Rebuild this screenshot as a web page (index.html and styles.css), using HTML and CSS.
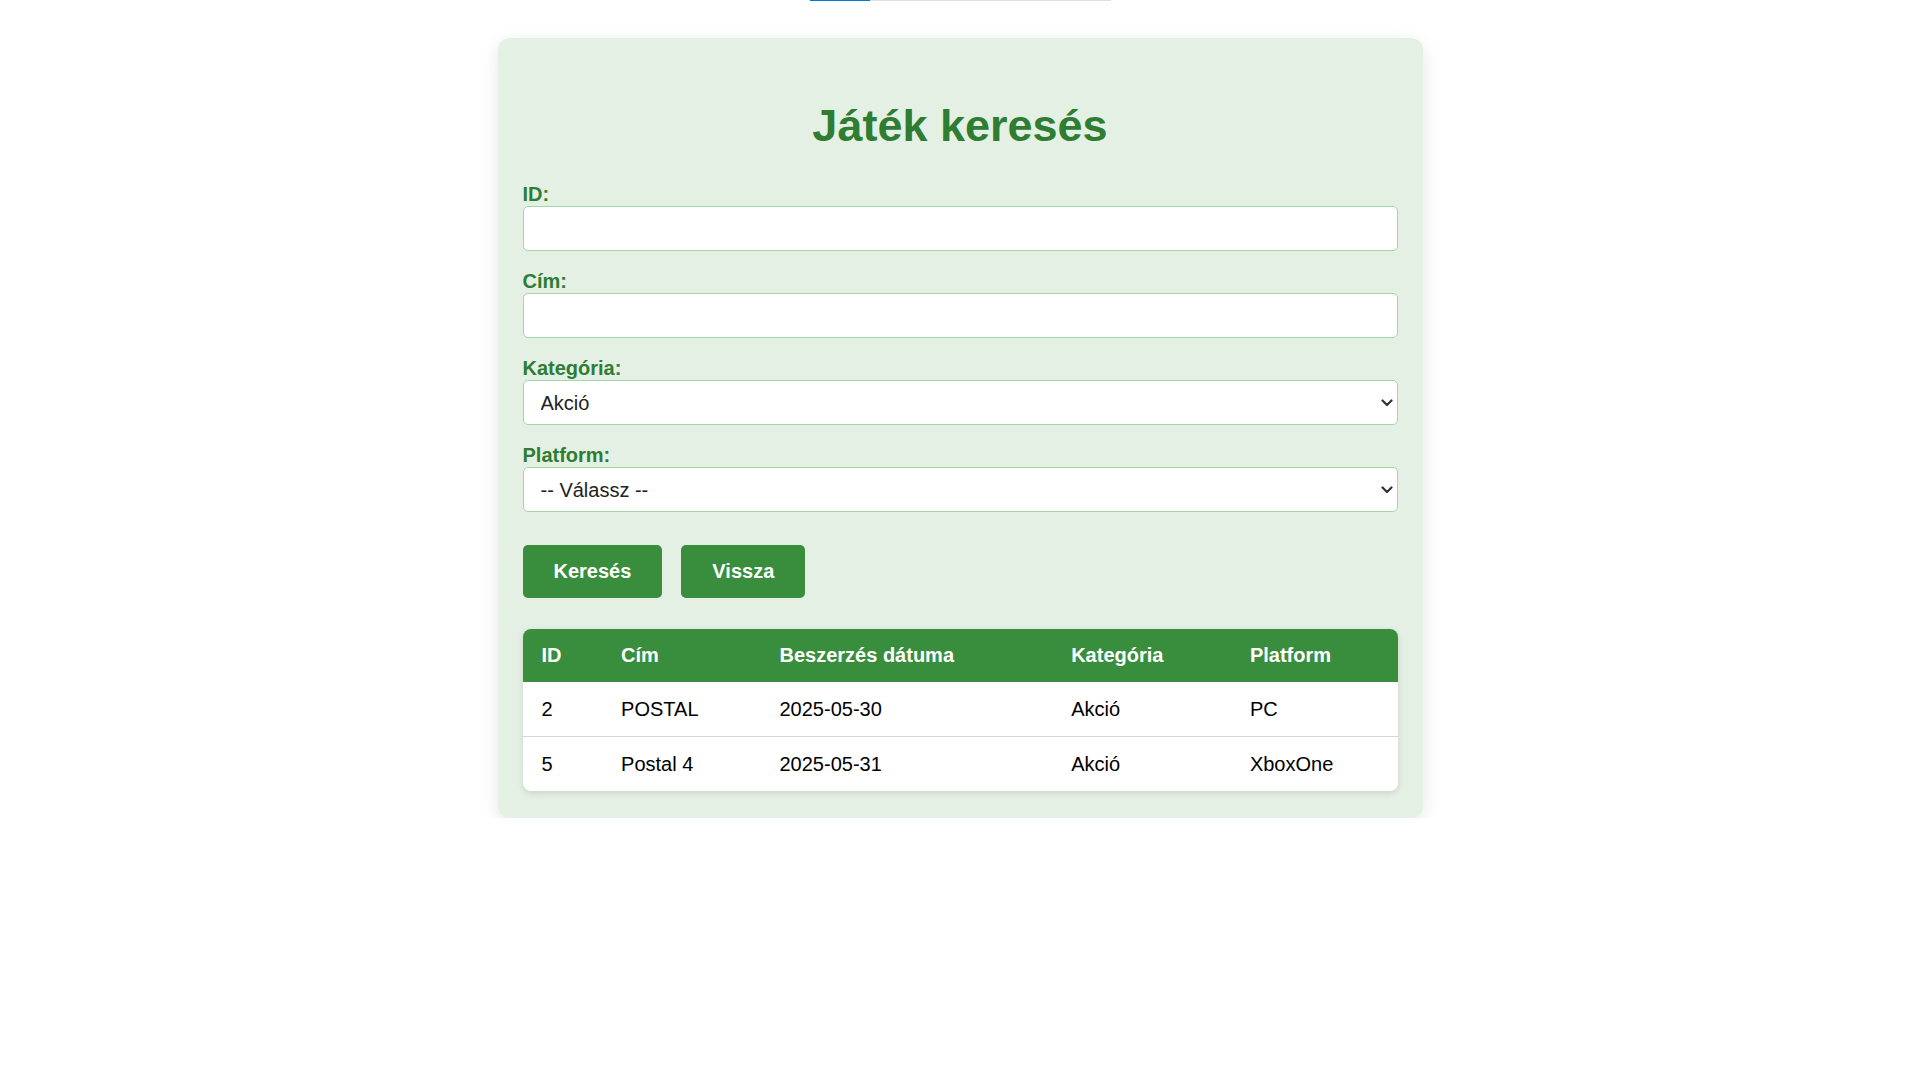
FILE: index.html
```html
<!DOCTYPE html>
<html lang="hu">
<head>
<meta charset="utf-8">
<title>Játék keresés</title>
<link rel="stylesheet" href="styles.css">
</head>
<body>
<div class="topbar"><div class="topbar-fill"></div></div>
<main class="card">
  <h1 class="title">Játék keresés</h1>
  <form class="form">
    <label class="label" for="id">ID:</label>
    <input class="field" id="id" type="text">
    <label class="label" for="cim">Cím:</label>
    <input class="field" id="cim" type="text">
    <label class="label" for="kat">Kategória:</label>
    <select class="field select" id="kat">
      <option>Akció</option>
    </select>
    <label class="label" for="plat">Platform:</label>
    <select class="field select" id="plat">
      <option>-- Válassz --</option>
    </select>
    <div class="actions">
      <button class="btn" type="button">Keresés</button>
      <button class="btn" type="button">Vissza</button>
    </div>
  </form>
  <table class="results">
    <thead>
      <tr><th>ID</th><th>Cím</th><th>Beszerzés dátuma</th><th>Kategória</th><th>Platform</th></tr>
    </thead>
    <tbody>
      <tr><td>2</td><td>POSTAL</td><td>2025-05-30</td><td>Akció</td><td>PC</td></tr>
      <tr><td>5</td><td>Postal 4</td><td>2025-05-31</td><td>Akció</td><td>XboxOne</td></tr>
    </tbody>
  </table>
</main>
</body>
</html>
```
FILE: styles.css
```css
* { box-sizing: border-box; }
html, body { margin: 0; padding: 0; background: #ffffff; }
body {
  font-family: "Liberation Sans", Arial, sans-serif;
  font-size: 20px;
  color: #000;
}
.topbar {
  width: 301px;
  height: 1px;
  margin: 0 auto;
  background: #e0e0e0;
  display: flex;
}
.topbar-fill { width: 60px; background: #0078d4; }
.card {
  width: 925px;
  margin: 37px auto 0;
  padding: 25px 25px 27px;
  background: #e5f0e4;
  border-radius: 12px;
  box-shadow: 0 5px 18px rgba(0, 0, 0, 0.10);
}
.title {
  margin: 37px 0 31px;
  text-align: center;
  font-size: 45px;
  font-weight: bold;
  color: #2e7d32;
  line-height: 52px;
}
.form { display: flex; flex-direction: column; }
.label {
  display: block;
  font-weight: bold;
  color: #2e7d32;
  line-height: 23px;
}
.field {
  width: 100%;
  height: 45px;
  margin: 0 0 19px;
  padding: 0 12px;
  border: 1px solid #a5d6a7;
  border-radius: 5px;
  background: #fff;
  font-family: inherit;
  font-size: 20px;
  color: #222;
}
.select {
  -webkit-appearance: none;
  appearance: none;
  padding-left: 17px;
  background-image: url("data:image/svg+xml;utf8,<svg xmlns='http://www.w3.org/2000/svg' width='12' height='8' viewBox='0 0 12 8'><path d='M1.5 1.5 L6 6 L10.5 1.5' fill='none' stroke='%23333' stroke-width='2.2' stroke-linecap='round' stroke-linejoin='round'/></svg>");
  background-repeat: no-repeat;
  background-position: right 4px center;
  background-size: 12px 8px;
}
.actions {
  display: flex;
  gap: 19px;
  margin: 14px 0 31px;
}
.btn {
  padding: 15px 31px;
  border: 0;
  border-radius: 5px;
  background: #388e3c;
  color: #fff;
  font-family: inherit;
  font-size: 20px;
  font-weight: bold;
  line-height: 23px;
}
.results {
  width: 100%;
  border-collapse: separate;
  border-spacing: 0;
  border-radius: 8px;
  overflow: hidden;
  background: #fff;
  box-shadow: 0 2px 6px rgba(0, 0, 0, 0.12);
}
.results th, .results td {
  text-align: left;
  padding: 15px 19px;
  line-height: 23px;
}
.results td { padding: 15.5px 19px; }
.results th {
  background: #388e3c;
  color: #fff;
  font-weight: bold;
}
.results tbody tr + tr td { border-top: 1px solid #d6d6d6; }
```
